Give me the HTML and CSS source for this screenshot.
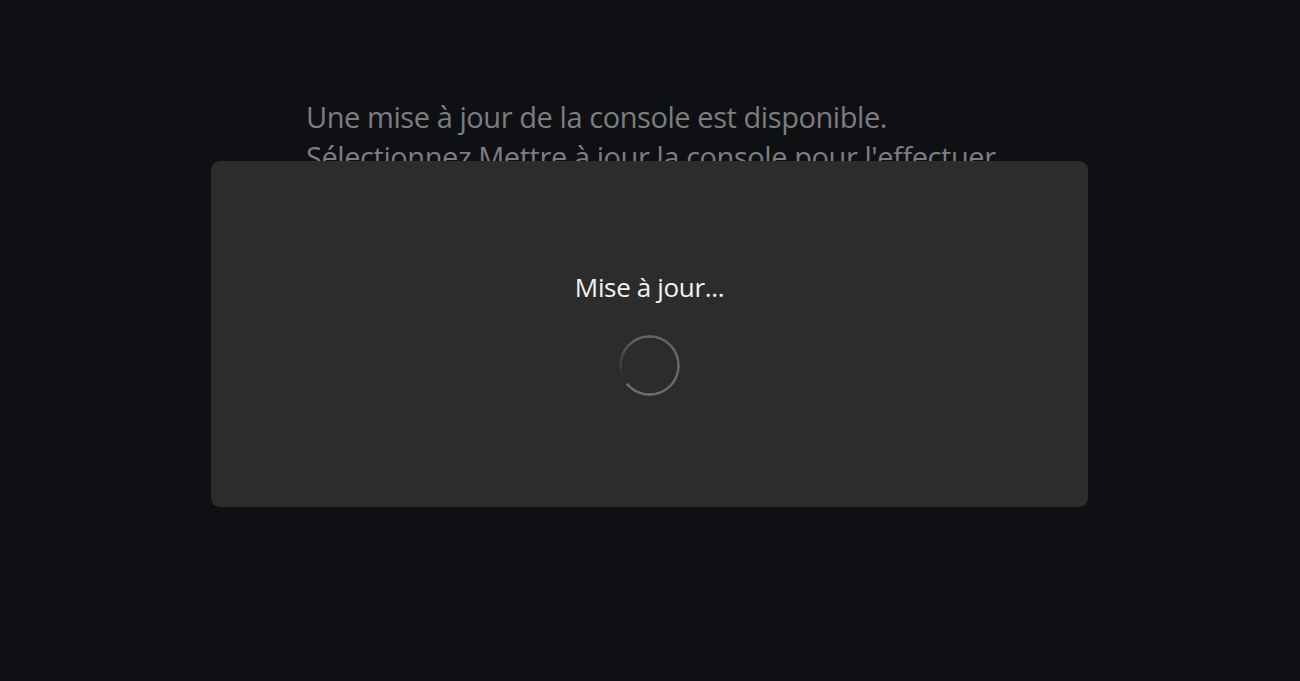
FILE: index.html
```html
<!DOCTYPE html>
<html lang="fr">
<head>
<meta charset="utf-8">
<title>Mise à jour</title>
<link rel="stylesheet" href="styles.css">
</head>
<body>
<main class="screen">
  <section class="notice">
    <p class="notice-line">Une mise à jour de la console est disponible.</p>
    <p class="notice-line">Sélectionnez Mettre à jour la console pour l'effectuer.</p>
  </section>
  <div class="dialog" role="dialog">
    <p class="dialog-title">Mise à jour...</p>
    <div class="spinner"></div>
  </div>
</main>
</body>
</html>
```
FILE: styles.css
```css
html, body {
  margin: 0;
  padding: 0;
  background: #0f1014;
  width: 100%;
  height: 100%;
  overflow: hidden;
}
.screen {
  position: relative;
  width: 1300px;
  height: 681px;
  font-family: "Open Sans", "Noto Sans", sans-serif;
}
.notice {
  padding: 97px 0 0 306px;
}
.notice-line {
  margin: 0;
  font-size: 29px;
  line-height: 40px;
  color: #7d7d7f;
  letter-spacing: -0.43px;
  white-space: nowrap;
}
.dialog {
  position: absolute;
  left: 211px;
  top: 161px;
  width: 877px;
  height: 346px;
  background: #2c2c2c;
  border-radius: 9px;
  display: flex;
  flex-direction: column;
  align-items: center;
}
.dialog-title {
  margin: 108px 0 0;
  font-size: 26px;
  line-height: 36px;
  color: #f2f2f2;
  letter-spacing: -0.35px;
}
.spinner {
  margin-top: 30px;
  width: 61px;
  height: 61px;
  border-radius: 50%;
  background: conic-gradient(from 245deg, rgba(110,110,110,0) 0deg, #606060 80deg, #6c6c6c 346deg, transparent 346deg);
  -webkit-mask: radial-gradient(circle, transparent 27.5px, #000 28px);
  mask: radial-gradient(circle, transparent 27.5px, #000 28px);
}
```
